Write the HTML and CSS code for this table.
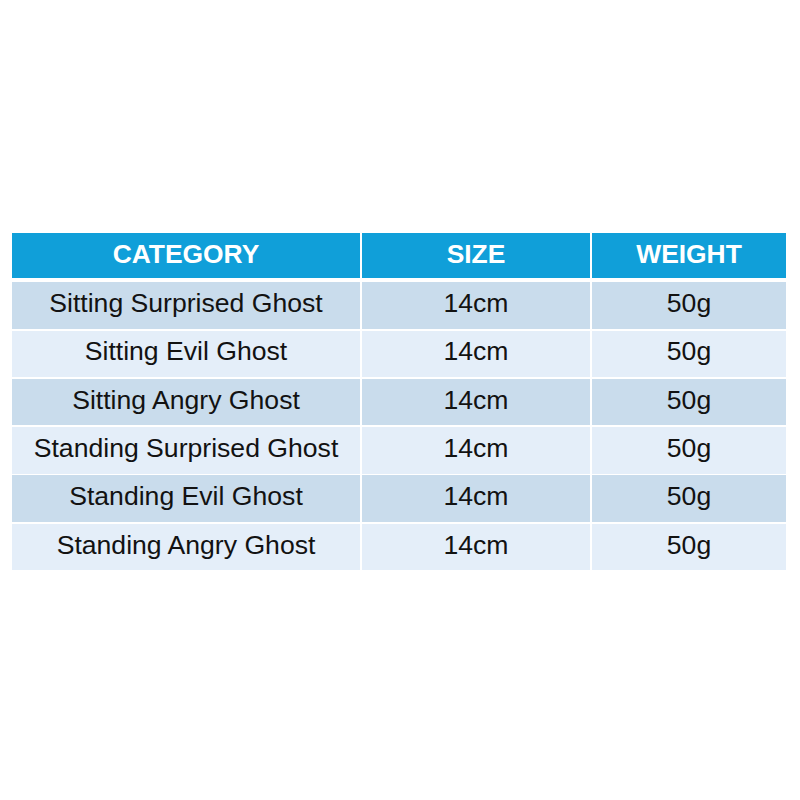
FILE: index.html
```html
<!DOCTYPE html>
<html>
<head>
<meta charset="utf-8">
<link rel="stylesheet" href="styles.css">
</head>
<body>
<div class="page">
  <div class="table">
    <div class="row head">
      <div class="cell">CATEGORY</div>
      <div class="cell">SIZE</div>
      <div class="cell">WEIGHT</div>
    </div>
    <div class="row odd">
      <div class="cell">Sitting Surprised Ghost</div>
      <div class="cell">14cm</div>
      <div class="cell">50g</div>
    </div>
    <div class="row even">
      <div class="cell">Sitting Evil Ghost</div>
      <div class="cell">14cm</div>
      <div class="cell">50g</div>
    </div>
    <div class="row odd">
      <div class="cell">Sitting Angry Ghost</div>
      <div class="cell">14cm</div>
      <div class="cell">50g</div>
    </div>
    <div class="row even">
      <div class="cell">Standing Surprised Ghost</div>
      <div class="cell">14cm</div>
      <div class="cell">50g</div>
    </div>
    <div class="row odd">
      <div class="cell">Standing Evil Ghost</div>
      <div class="cell">14cm</div>
      <div class="cell">50g</div>
    </div>
    <div class="row even">
      <div class="cell">Standing Angry Ghost</div>
      <div class="cell">14cm</div>
      <div class="cell">50g</div>
    </div>
  </div>
</div>
</body>
</html>
```

FILE: styles.css
```css
html, body {
  margin: 0;
  padding: 0;
  background: #ffffff;
}

.page {
  width: 800px;
  height: 800px;
  padding: 232.5px 0 0 12px;
  box-sizing: border-box;
  font-family: "Liberation Sans", Arial, sans-serif;
}

.table {
  width: 774px;
  display: flex;
  flex-direction: column;
  gap: 1.8px;
}

.row {
  display: grid;
  grid-template-columns: 348px 228px 194px;
  column-gap: 2px;
  height: 46.5px;
}

.cell {
  display: flex;
  align-items: center;
  justify-content: center;
  font-size: 26.6px;
  color: #121212;
  padding-bottom: 4px;
  box-sizing: border-box;
  white-space: nowrap;
}

.head {
  height: 45.2px;
  margin-bottom: 2.8px;
}

.head .cell {
  background: #109fd9;
  color: #ffffff;
  font-weight: bold;
  font-size: 26.4px;
  padding-bottom: 2px;
}

.odd .cell {
  background: #c9dcec;
}

.even .cell {
  background: #e4eef9;
}
```
